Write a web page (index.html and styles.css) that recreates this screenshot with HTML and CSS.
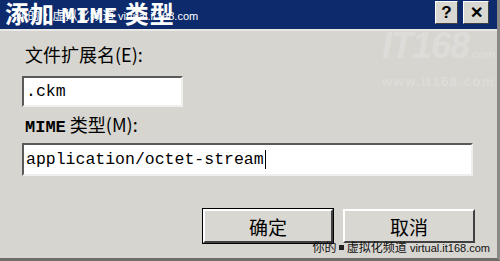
FILE: index.html
```html
<!DOCTYPE html>
<html lang="zh-CN">
<head>
  <meta charset="UTF-8">
  <title>添加 MIME 类型</title>
  <link rel="stylesheet" href="styles.css">
</head>
<body>
  <div class="dialog">
    <div class="titlebar">
      <span class="title">添加 <span class="mono">MIME</span> 类型</span>
      <div class="tb-buttons">
        <span class="tb-btn">?</span>
        <span class="tb-btn close">&#x2715;</span>
      </div>
      <div class="wm-top"><span class="cjk">你的·虚拟化频道</span> virtual.it168.com</div>
    </div>

    <div class="content">
      <div class="logo-wm">
        <div class="logo-big">IT168<span>.com</span></div>
        <div class="logo-url">www.it168.com</div>
      </div>

      <div class="label">文件扩展名(E):</div>
      <div class="field short">.ckm</div>

      <div class="label second"><span class="mono">MIME</span> 类型(M):</div>
      <div class="field long">application/octet-stream<span class="caret"></span></div>

      <div class="actions">
        <button class="btn default">确定</button>
        <button class="btn">取消</button>
      </div>
    </div>

    <div class="wm-bottom"><span class="cjk">你的 <span class="sq"></span> 虚拟化频道</span> virtual.it168.com</div>
  </div>
</body>
</html>
```

FILE: styles.css
```css
html, body {
  margin: 0;
  padding: 0;
}
body {
  width: 500px;
  height: 261px;
  overflow: hidden;
  background: #d7d5cf;
  font-family: "Noto Sans CJK SC", "Liberation Sans", sans-serif;
}
.dialog {
  position: relative;
  width: 500px;
  height: 261px;
  box-sizing: border-box;
  border-right: 3px solid #8a8985;
  border-bottom: 3px solid #6e6d6a;
  background: #d7d5cf;
}
.mono {
  font-family: "Liberation Mono", monospace;
}

/* title bar */
.titlebar {
  position: relative;
  height: 29px;
  background: #0c2a6c;
  border-bottom: 2px solid #e9e8e4;
  display: flex;
  align-items: center;
  justify-content: space-between;
  padding: 0 8px 0 5px;
}
.title {
  color: white;
  font-weight: bold;
  font-size: 24px;
  line-height: 29px;
  letter-spacing: 1px;
}
.title .mono {
  font-size: 22px;
}
.tb-buttons {
  display: flex;
  gap: 5px;
  margin-top: -4px;
}
.tb-btn {
  width: 21px;
  height: 21px;
  background: #d9d7d1;
  border-top: 1px solid #ffffff;
  border-left: 1px solid #ffffff;
  border-right: 1px solid #404040;
  border-bottom: 1px solid #404040;
  display: flex;
  align-items: center;
  justify-content: center;
  font-family: "Liberation Sans", sans-serif;
  font-weight: bold;
  font-size: 17px;
  color: #000;
}
.tb-btn.close {
  width: 24px;
  font-size: 16px;
}
.wm-top {
  position: absolute;
  left: 15px;
  top: 7px;
  color: white;
  font-family: "Liberation Sans", sans-serif;
  font-size: 11px;
  line-height: 16px;
}
.wm-top .cjk {
  font-family: "Noto Sans CJK SC", sans-serif;
  font-size: 12px;
  letter-spacing: 0.5px;
}

/* body */
.content {
  position: relative;
  padding: 12px 22px 0 22px;
}
.logo-wm {
  position: absolute;
  left: 382px;
  top: -2px;
  color: rgba(255, 255, 255, 0.2);
  font-family: "Liberation Sans", sans-serif;
  font-weight: bold;
  font-style: italic;
}
.logo-big {
  font-size: 36px;
  line-height: 34px;
  letter-spacing: -1px;
}
.logo-big span {
  font-size: 11px;
  letter-spacing: 0;
}
.logo-url {
  font-size: 13px;
  font-style: normal;
  letter-spacing: 1.5px;
  margin-top: 3px;
}
.label {
  font-size: 18px;
  line-height: 22px;
  padding-left: 3px;
  color: #000;
}
.label.second {
  margin-top: 6px;
}
.label .mono {
  font-size: 17px;
  font-weight: bold;
}
.field {
  box-sizing: border-box;
  background: #ffffff;
  border-top: 2px solid #5a5a5a;
  border-left: 2px solid #5a5a5a;
  border-right: 2px solid #eeeeec;
  border-bottom: 2px solid #eeeeec;
  font-family: "Liberation Mono", monospace;
  font-size: 16.5px;
  color: #000;
  padding: 0 0 0 2px;
  display: flex;
  align-items: center;
}
.field.short {
  width: 161px;
  height: 31px;
  margin-top: 11px;
}
.field.long {
  width: 451px;
  height: 33px;
  margin-top: 4px;
}
.caret {
  display: inline-block;
  width: 1px;
  height: 19px;
  background: #000;
  margin-left: 1px;
}
.actions {
  display: flex;
  justify-content: flex-end;
  gap: 10px;
  margin-top: 33px;
}
.btn {
  box-sizing: border-box;
  width: 132px;
  height: 34px;
  background: #d9d7d1;
  border-top: 2px solid #ffffff;
  border-left: 2px solid #ffffff;
  border-right: 2px solid #404040;
  border-bottom: 2px solid #404040;
  font-family: "Noto Sans CJK SC", sans-serif;
  font-size: 19px;
  color: #000;
  padding: 0;
}
.btn.default {
  outline: 1px solid #000;
  width: 130px;
}
.wm-bottom {
  position: absolute;
  right: 7px;
  bottom: 3px;
  color: #111;
  font-family: "Liberation Sans", sans-serif;
  font-size: 11px;
  line-height: 14px;
}
.wm-bottom .cjk {
  font-family: "Noto Sans CJK SC", sans-serif;
  font-size: 12px;
}
.sq {
  display: inline-block;
  width: 5px;
  height: 5px;
  background: #222;
  vertical-align: 2px;
}
```
